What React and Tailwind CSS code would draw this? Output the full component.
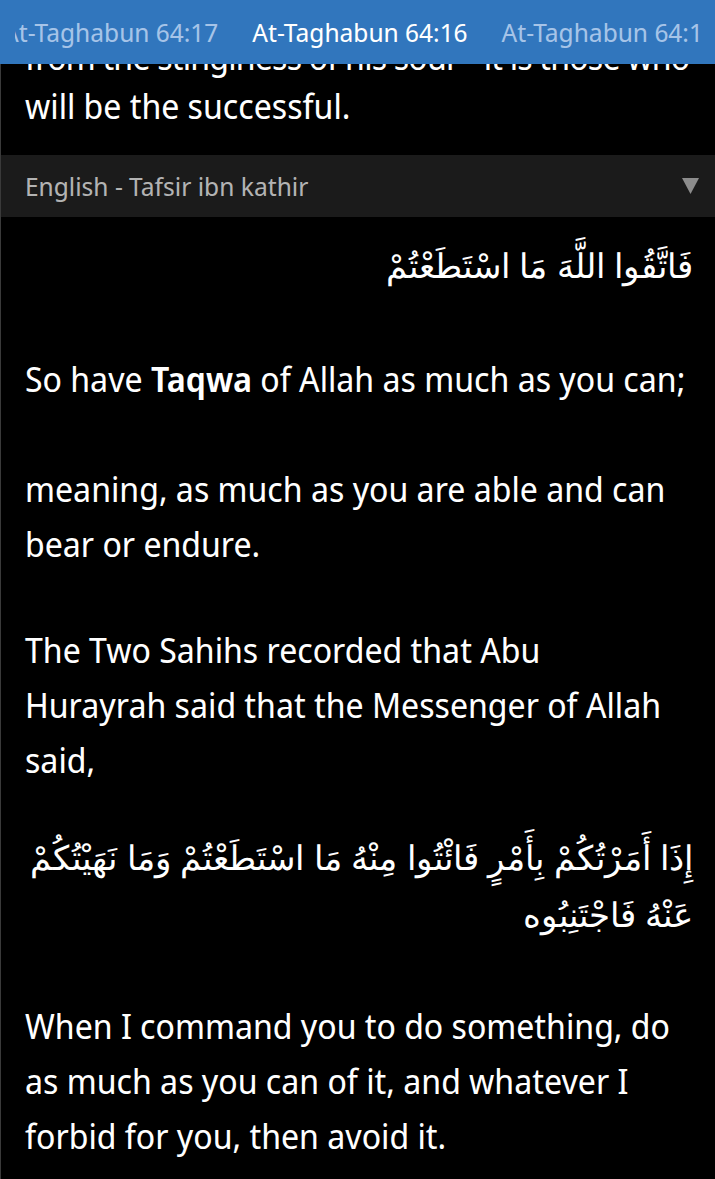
import React from 'react';

const tabs = ['At-Taghabun 64:17', 'At-Taghabun 64:16', 'At-Taghabun 64:18'];

function ArrowDown() {
  return (
    <svg width="17" height="16" viewBox="0 0 17 16" className="shrink-0">
      <polygon points="0,0 17,0 8.5,16" fill="#8c8c8c" />
    </svg>
  );
}

export default function App() {
  return (
    <div className="h-screen overflow-hidden bg-black font-['Noto_Sans_Display','Noto_Sans',sans-serif] text-white">
      {/* Verse bar */}
      <header className="relative z-10 flex h-16 items-center bg-[#3176bd] px-[15px]">
        <div className="flex gap-[34px] overflow-hidden whitespace-nowrap text-[26px]">
          {tabs.map((t, i) => (
            <span key={t} className={i === 0 ? '-ml-[12px] text-[#a6c4e8]' : i === 1 ? 'text-white' : 'text-[#a6c4e8]'}>
              {t}
            </span>
          ))}
        </div>
      </header>

      <main className="h-[calc(100vh-64px)] overflow-hidden border-l border-[#3a3a3a]">
        {/* translation, scrolled up under the bar */}
        <div className="-mt-[34px] px-[24px] text-[34px] leading-[55px] whitespace-nowrap">
          <div className="tracking-[-0.8px]">from the stinginess of his soul – it is those who</div>
          <div className="-mt-[6px]">will be the successful.</div>
        </div>

        {/* Tafsir picker */}
        <div className="mt-[21px] flex h-[62px] items-center justify-between bg-[#1b1b1b] pl-[24px] pr-[16px]">
          <span className="text-[26px] text-[#b3b3b3]">English - Tafsir ibn kathir</span>
          <ArrowDown />
        </div>

        <div className="pl-[24px] pr-[30px] text-[34px] leading-[55px]">
          <p dir="rtl" className="-mr-[8px] mt-[21px] text-right font-[sans-serif] leading-[57px]">
            فَاتَّقُوا اللَّهَ مَا اسْتَطَعْتُمْ
          </p>
          <p className="mt-[57px] whitespace-nowrap">
            So have <b className="font-semibold">Taqwa</b> of Allah as much as you can;
          </p>
          <p className="mt-[55px]">meaning, as much as you are able and can bear or endure.</p>
          <p className="mt-[51px]">The Two Sahihs recorded that Abu Hurayrah said that the Messenger of Allah said,</p>
          <p dir="rtl" className="-mr-[8px] mt-[42px] text-right font-[sans-serif] leading-[57px]">
            إِذَا أَمَرْتُكُمْ بِأَمْرٍ فَائْتُوا مِنْهُ مَا اسْتَطَعْتُمْ وَمَا نَهَيْتُكُمْ عَنْهُ فَاجْتَنِبُوه
          </p>
          <p className="mt-[55px]">
            When I command you to do something, do as much as you can of it, and whatever I forbid for you, then avoid it.
          </p>
        </div>
      </main>
    </div>
  );
}
